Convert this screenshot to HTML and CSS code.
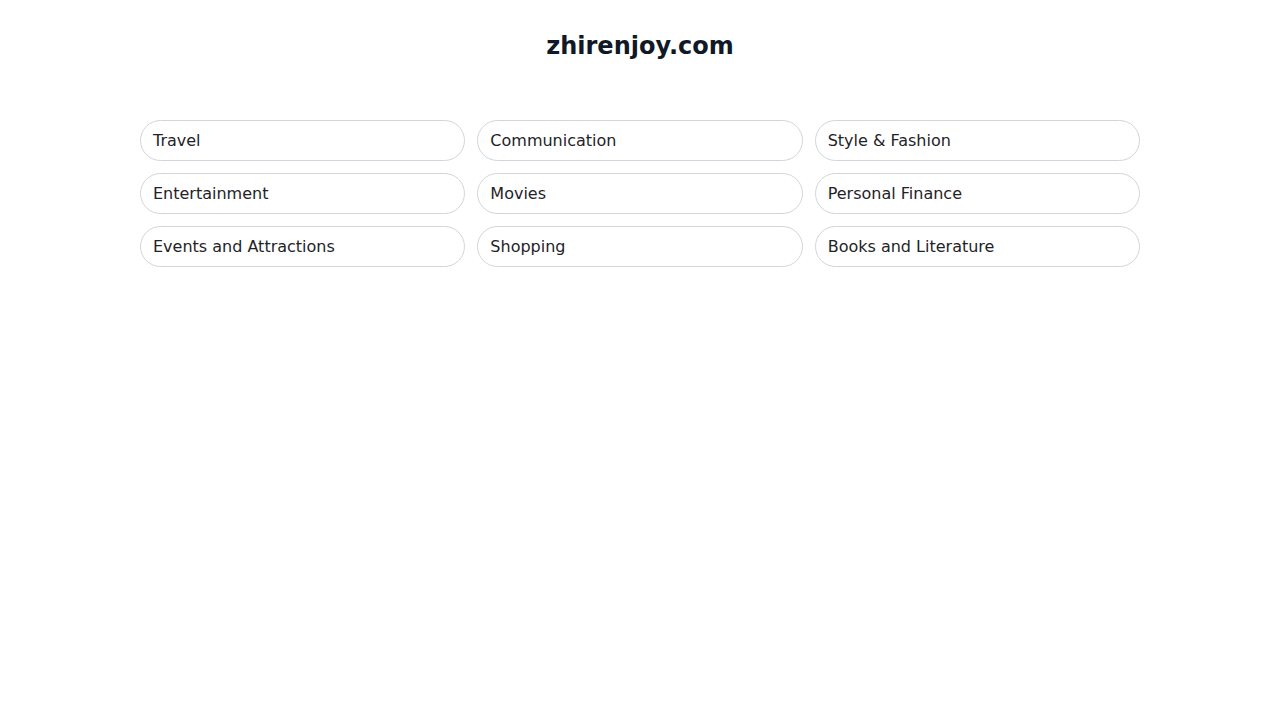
FILE: index.html
```html
<!DOCTYPE html>
<html lang="en">
<head>
<meta charset="utf-8">
<title>zhirenjoy.com</title>
<link rel="stylesheet" href="styles.css">
</head>
<body>
<main class="page">
  <h1 class="title">zhirenjoy.com</h1>
  <div class="grid">
    <a class="pill" href="#">Travel</a>
    <a class="pill" href="#">Communication</a>
    <a class="pill" href="#">Style &amp; Fashion</a>
    <a class="pill" href="#">Entertainment</a>
    <a class="pill" href="#">Movies</a>
    <a class="pill" href="#">Personal Finance</a>
    <a class="pill" href="#">Events and Attractions</a>
    <a class="pill" href="#">Shopping</a>
    <a class="pill" href="#">Books and Literature</a>
  </div>
</main>
</body>
</html>
```
FILE: styles.css
```css
html, body {
  margin: 0;
  padding: 0;
  background: #ffffff;
}
body {
  font-family: "DejaVu Sans", "Liberation Sans", sans-serif;
  color: #111827;
}
.page {
  width: 1000px;
  margin: 0 auto;
  padding-top: 30px;
}
.title {
  margin: 0 0 58px;
  font-size: 24px;
  line-height: 32px;
  font-weight: bold;
  text-align: center;
  color: #111827;
}
.grid {
  display: grid;
  grid-template-columns: repeat(3, 1fr);
  gap: 12px;
}
.pill {
  display: block;
  border: 1px solid #d1d5db;
  border-radius: 999px;
  padding: 8px 12px;
  font-size: 16px;
  line-height: 23px;
  color: #1f2328;
  text-decoration: none;
}
```
